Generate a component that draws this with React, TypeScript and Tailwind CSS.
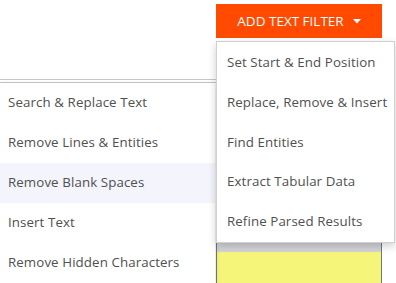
import React from "react";

const leftItems = [
  "Search & Replace Text",
  "Remove Lines & Entities",
  "Remove Blank Spaces",
  "Insert Text",
  "Remove Hidden Characters",
];

const rightItems = [
  "Set Start & End Position",
  "Replace, Remove & Insert",
  "Find Entities",
  "Extract Tabular Data",
  "Refine Parsed Results",
];

export default function App() {
  return (
    <div
      className="relative w-[396px] h-[283px] bg-white overflow-hidden text-[#505050]"
      style={{ fontFamily: '"Open Sans", "Noto Sans", sans-serif' }}
    >
      {/* underlying page content (flow) */}
      <div className="flex flex-col">
        <div className="flex pl-[216px] pt-[4px]">
          <button className="w-[166px] h-[34px] bg-[#ff4a00] text-white text-[13.5px] flex items-center justify-center gap-[9px]">
            <span>ADD TEXT FILTER</span>
            <svg width="8" height="5" viewBox="0 0 8 5">
              <path d="M0 0 L8 0 L4 4.5 Z" fill="white" />
            </svg>
          </button>
        </div>
        <div className="mt-[41px] w-[230px] h-[4px] border-t border-b border-[#c8c8c8]" />
        <div className="ml-[216px] w-[166px] h-[200px] flex flex-col border-l border-r border-[#777]">
          <div className="h-[30px] bg-[#b8b84a]" />
          <div className="h-[130px] bg-[#1f2a3d]" />
          <div className="h-[9px] bg-[#d4d4d8]" />
          <div className="flex-1 bg-[#f5f57a]" />
        </div>
      </div>

      {/* left menu (overlay) */}
      <div className="absolute left-0 top-[83px] w-[215px] bg-white flex flex-col text-[13.3px] tracking-[0.1px] shadow-[0_2px_6px_rgba(0,0,0,0.15)]">
        {leftItems.map((t) => (
          <div
            key={t}
            className={`h-[40px] flex items-center pl-[8px] ${
              t === "Remove Blank Spaces" ? "bg-[#f3f4fc]" : ""
            }`}
          >
            {t}
          </div>
        ))}
      </div>

      {/* right menu (overlay) */}
      <div className="absolute left-[216px] top-[41px] w-[179px] h-[202px] bg-white border border-[#d0d0d0] flex flex-col pt-[1px] text-[13.3px] tracking-[0.1px] shadow-[0_3px_8px_rgba(0,0,0,0.2)]">
        {rightItems.map((t) => (
          <div key={t} className="h-[40px] flex items-center pl-[10px]">
            {t}
          </div>
        ))}
      </div>
    </div>
  );
}
